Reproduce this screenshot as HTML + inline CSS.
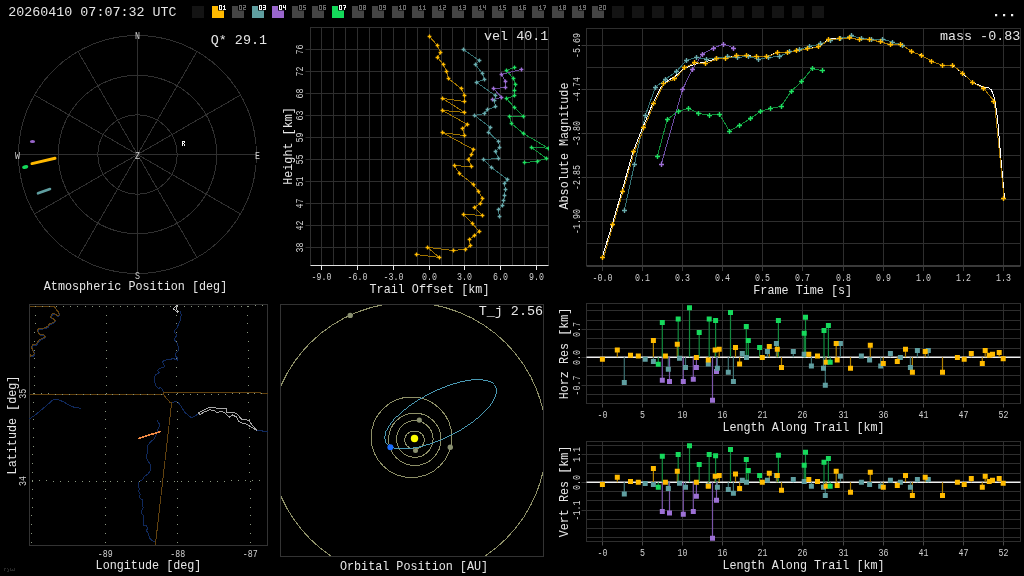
<!DOCTYPE html><html><head><meta charset="utf-8"><style>html,body{margin:0;padding:0;background:#000;width:1024px;height:576px;overflow:hidden}svg{display:block;will-change:transform}text{font-family:"Liberation Mono",monospace}</style></head><body>
<svg width="1024" height="576" viewBox="0 0 1024 576">
<rect width="1024" height="576" fill="#000"/>
<text x="8.3" y="16" font-size="13.35" fill="#e6e6e6">20260410 07:07:32 UTC</text>
<rect x="192" y="6" width="12" height="12" fill="#141414"/>
<rect x="212" y="6" width="12" height="12" fill="#ffb900"/>
<rect x="218" y="4" width="9" height="6.5" fill="#000"/>
<path d="M219 5h1v1h-1zM220 5h1v1h-1zM221 5h1v1h-1zM219 6h1v1h-1zM221 6h1v1h-1zM219 7h1v1h-1zM221 7h1v1h-1zM219 8h1v1h-1zM221 8h1v1h-1zM219 9h1v1h-1zM220 9h1v1h-1zM221 9h1v1h-1zM224 5h1v1h-1zM223 6h1v1h-1zM224 6h1v1h-1zM224 7h1v1h-1zM224 8h1v1h-1zM223 9h1v1h-1zM224 9h1v1h-1zM225 9h1v1h-1z" fill="#f4f4f4"/>
<rect x="232" y="6" width="12" height="12" fill="#444"/>
<rect x="238" y="4" width="9" height="6.5" fill="#000"/>
<path d="M239 5h1v1h-1zM240 5h1v1h-1zM241 5h1v1h-1zM239 6h1v1h-1zM241 6h1v1h-1zM239 7h1v1h-1zM241 7h1v1h-1zM239 8h1v1h-1zM241 8h1v1h-1zM239 9h1v1h-1zM240 9h1v1h-1zM241 9h1v1h-1zM243 5h1v1h-1zM244 5h1v1h-1zM245 5h1v1h-1zM245 6h1v1h-1zM243 7h1v1h-1zM244 7h1v1h-1zM245 7h1v1h-1zM243 8h1v1h-1zM243 9h1v1h-1zM244 9h1v1h-1zM245 9h1v1h-1z" fill="#666"/>
<rect x="252" y="6" width="12" height="12" fill="#5f9ea0"/>
<rect x="258" y="4" width="9" height="6.5" fill="#000"/>
<path d="M259 5h1v1h-1zM260 5h1v1h-1zM261 5h1v1h-1zM259 6h1v1h-1zM261 6h1v1h-1zM259 7h1v1h-1zM261 7h1v1h-1zM259 8h1v1h-1zM261 8h1v1h-1zM259 9h1v1h-1zM260 9h1v1h-1zM261 9h1v1h-1zM263 5h1v1h-1zM264 5h1v1h-1zM265 5h1v1h-1zM265 6h1v1h-1zM263 7h1v1h-1zM264 7h1v1h-1zM265 7h1v1h-1zM265 8h1v1h-1zM263 9h1v1h-1zM264 9h1v1h-1zM265 9h1v1h-1z" fill="#f4f4f4"/>
<rect x="272" y="6" width="12" height="12" fill="#9966cc"/>
<rect x="278" y="4" width="9" height="6.5" fill="#000"/>
<path d="M279 5h1v1h-1zM280 5h1v1h-1zM281 5h1v1h-1zM279 6h1v1h-1zM281 6h1v1h-1zM279 7h1v1h-1zM281 7h1v1h-1zM279 8h1v1h-1zM281 8h1v1h-1zM279 9h1v1h-1zM280 9h1v1h-1zM281 9h1v1h-1zM283 5h1v1h-1zM285 5h1v1h-1zM283 6h1v1h-1zM285 6h1v1h-1zM283 7h1v1h-1zM284 7h1v1h-1zM285 7h1v1h-1zM285 8h1v1h-1zM285 9h1v1h-1z" fill="#f4f4f4"/>
<rect x="292" y="6" width="12" height="12" fill="#444"/>
<rect x="298" y="4" width="9" height="6.5" fill="#000"/>
<path d="M299 5h1v1h-1zM300 5h1v1h-1zM301 5h1v1h-1zM299 6h1v1h-1zM301 6h1v1h-1zM299 7h1v1h-1zM301 7h1v1h-1zM299 8h1v1h-1zM301 8h1v1h-1zM299 9h1v1h-1zM300 9h1v1h-1zM301 9h1v1h-1zM303 5h1v1h-1zM304 5h1v1h-1zM305 5h1v1h-1zM303 6h1v1h-1zM303 7h1v1h-1zM304 7h1v1h-1zM305 7h1v1h-1zM305 8h1v1h-1zM303 9h1v1h-1zM304 9h1v1h-1zM305 9h1v1h-1z" fill="#666"/>
<rect x="312" y="6" width="12" height="12" fill="#444"/>
<rect x="318" y="4" width="9" height="6.5" fill="#000"/>
<path d="M319 5h1v1h-1zM320 5h1v1h-1zM321 5h1v1h-1zM319 6h1v1h-1zM321 6h1v1h-1zM319 7h1v1h-1zM321 7h1v1h-1zM319 8h1v1h-1zM321 8h1v1h-1zM319 9h1v1h-1zM320 9h1v1h-1zM321 9h1v1h-1zM323 5h1v1h-1zM324 5h1v1h-1zM325 5h1v1h-1zM323 6h1v1h-1zM323 7h1v1h-1zM324 7h1v1h-1zM325 7h1v1h-1zM323 8h1v1h-1zM325 8h1v1h-1zM323 9h1v1h-1zM324 9h1v1h-1zM325 9h1v1h-1z" fill="#666"/>
<rect x="332" y="6" width="12" height="12" fill="#14d95a"/>
<rect x="338" y="4" width="9" height="6.5" fill="#000"/>
<path d="M339 5h1v1h-1zM340 5h1v1h-1zM341 5h1v1h-1zM339 6h1v1h-1zM341 6h1v1h-1zM339 7h1v1h-1zM341 7h1v1h-1zM339 8h1v1h-1zM341 8h1v1h-1zM339 9h1v1h-1zM340 9h1v1h-1zM341 9h1v1h-1zM343 5h1v1h-1zM344 5h1v1h-1zM345 5h1v1h-1zM345 6h1v1h-1zM344 7h1v1h-1zM345 7h1v1h-1zM344 8h1v1h-1zM344 9h1v1h-1z" fill="#f4f4f4"/>
<rect x="352" y="6" width="12" height="12" fill="#444"/>
<rect x="358" y="4" width="9" height="6.5" fill="#000"/>
<path d="M359 5h1v1h-1zM360 5h1v1h-1zM361 5h1v1h-1zM359 6h1v1h-1zM361 6h1v1h-1zM359 7h1v1h-1zM361 7h1v1h-1zM359 8h1v1h-1zM361 8h1v1h-1zM359 9h1v1h-1zM360 9h1v1h-1zM361 9h1v1h-1zM363 5h1v1h-1zM364 5h1v1h-1zM365 5h1v1h-1zM363 6h1v1h-1zM365 6h1v1h-1zM363 7h1v1h-1zM364 7h1v1h-1zM365 7h1v1h-1zM363 8h1v1h-1zM365 8h1v1h-1zM363 9h1v1h-1zM364 9h1v1h-1zM365 9h1v1h-1z" fill="#666"/>
<rect x="372" y="6" width="12" height="12" fill="#444"/>
<rect x="378" y="4" width="9" height="6.5" fill="#000"/>
<path d="M379 5h1v1h-1zM380 5h1v1h-1zM381 5h1v1h-1zM379 6h1v1h-1zM381 6h1v1h-1zM379 7h1v1h-1zM381 7h1v1h-1zM379 8h1v1h-1zM381 8h1v1h-1zM379 9h1v1h-1zM380 9h1v1h-1zM381 9h1v1h-1zM383 5h1v1h-1zM384 5h1v1h-1zM385 5h1v1h-1zM383 6h1v1h-1zM385 6h1v1h-1zM383 7h1v1h-1zM384 7h1v1h-1zM385 7h1v1h-1zM385 8h1v1h-1zM383 9h1v1h-1zM384 9h1v1h-1zM385 9h1v1h-1z" fill="#666"/>
<rect x="392" y="6" width="12" height="12" fill="#444"/>
<rect x="398" y="4" width="9" height="6.5" fill="#000"/>
<path d="M400 5h1v1h-1zM399 6h1v1h-1zM400 6h1v1h-1zM400 7h1v1h-1zM400 8h1v1h-1zM399 9h1v1h-1zM400 9h1v1h-1zM401 9h1v1h-1zM403 5h1v1h-1zM404 5h1v1h-1zM405 5h1v1h-1zM403 6h1v1h-1zM405 6h1v1h-1zM403 7h1v1h-1zM405 7h1v1h-1zM403 8h1v1h-1zM405 8h1v1h-1zM403 9h1v1h-1zM404 9h1v1h-1zM405 9h1v1h-1z" fill="#666"/>
<rect x="412" y="6" width="12" height="12" fill="#444"/>
<rect x="418" y="4" width="9" height="6.5" fill="#000"/>
<path d="M420 5h1v1h-1zM419 6h1v1h-1zM420 6h1v1h-1zM420 7h1v1h-1zM420 8h1v1h-1zM419 9h1v1h-1zM420 9h1v1h-1zM421 9h1v1h-1zM424 5h1v1h-1zM423 6h1v1h-1zM424 6h1v1h-1zM424 7h1v1h-1zM424 8h1v1h-1zM423 9h1v1h-1zM424 9h1v1h-1zM425 9h1v1h-1z" fill="#666"/>
<rect x="432" y="6" width="12" height="12" fill="#444"/>
<rect x="438" y="4" width="9" height="6.5" fill="#000"/>
<path d="M440 5h1v1h-1zM439 6h1v1h-1zM440 6h1v1h-1zM440 7h1v1h-1zM440 8h1v1h-1zM439 9h1v1h-1zM440 9h1v1h-1zM441 9h1v1h-1zM443 5h1v1h-1zM444 5h1v1h-1zM445 5h1v1h-1zM445 6h1v1h-1zM443 7h1v1h-1zM444 7h1v1h-1zM445 7h1v1h-1zM443 8h1v1h-1zM443 9h1v1h-1zM444 9h1v1h-1zM445 9h1v1h-1z" fill="#666"/>
<rect x="452" y="6" width="12" height="12" fill="#444"/>
<rect x="458" y="4" width="9" height="6.5" fill="#000"/>
<path d="M460 5h1v1h-1zM459 6h1v1h-1zM460 6h1v1h-1zM460 7h1v1h-1zM460 8h1v1h-1zM459 9h1v1h-1zM460 9h1v1h-1zM461 9h1v1h-1zM463 5h1v1h-1zM464 5h1v1h-1zM465 5h1v1h-1zM465 6h1v1h-1zM463 7h1v1h-1zM464 7h1v1h-1zM465 7h1v1h-1zM465 8h1v1h-1zM463 9h1v1h-1zM464 9h1v1h-1zM465 9h1v1h-1z" fill="#666"/>
<rect x="472" y="6" width="12" height="12" fill="#444"/>
<rect x="478" y="4" width="9" height="6.5" fill="#000"/>
<path d="M480 5h1v1h-1zM479 6h1v1h-1zM480 6h1v1h-1zM480 7h1v1h-1zM480 8h1v1h-1zM479 9h1v1h-1zM480 9h1v1h-1zM481 9h1v1h-1zM483 5h1v1h-1zM485 5h1v1h-1zM483 6h1v1h-1zM485 6h1v1h-1zM483 7h1v1h-1zM484 7h1v1h-1zM485 7h1v1h-1zM485 8h1v1h-1zM485 9h1v1h-1z" fill="#666"/>
<rect x="492" y="6" width="12" height="12" fill="#444"/>
<rect x="498" y="4" width="9" height="6.5" fill="#000"/>
<path d="M500 5h1v1h-1zM499 6h1v1h-1zM500 6h1v1h-1zM500 7h1v1h-1zM500 8h1v1h-1zM499 9h1v1h-1zM500 9h1v1h-1zM501 9h1v1h-1zM503 5h1v1h-1zM504 5h1v1h-1zM505 5h1v1h-1zM503 6h1v1h-1zM503 7h1v1h-1zM504 7h1v1h-1zM505 7h1v1h-1zM505 8h1v1h-1zM503 9h1v1h-1zM504 9h1v1h-1zM505 9h1v1h-1z" fill="#666"/>
<rect x="512" y="6" width="12" height="12" fill="#444"/>
<rect x="518" y="4" width="9" height="6.5" fill="#000"/>
<path d="M520 5h1v1h-1zM519 6h1v1h-1zM520 6h1v1h-1zM520 7h1v1h-1zM520 8h1v1h-1zM519 9h1v1h-1zM520 9h1v1h-1zM521 9h1v1h-1zM523 5h1v1h-1zM524 5h1v1h-1zM525 5h1v1h-1zM523 6h1v1h-1zM523 7h1v1h-1zM524 7h1v1h-1zM525 7h1v1h-1zM523 8h1v1h-1zM525 8h1v1h-1zM523 9h1v1h-1zM524 9h1v1h-1zM525 9h1v1h-1z" fill="#666"/>
<rect x="532" y="6" width="12" height="12" fill="#444"/>
<rect x="538" y="4" width="9" height="6.5" fill="#000"/>
<path d="M540 5h1v1h-1zM539 6h1v1h-1zM540 6h1v1h-1zM540 7h1v1h-1zM540 8h1v1h-1zM539 9h1v1h-1zM540 9h1v1h-1zM541 9h1v1h-1zM543 5h1v1h-1zM544 5h1v1h-1zM545 5h1v1h-1zM545 6h1v1h-1zM544 7h1v1h-1zM545 7h1v1h-1zM544 8h1v1h-1zM544 9h1v1h-1z" fill="#666"/>
<rect x="552" y="6" width="12" height="12" fill="#444"/>
<rect x="558" y="4" width="9" height="6.5" fill="#000"/>
<path d="M560 5h1v1h-1zM559 6h1v1h-1zM560 6h1v1h-1zM560 7h1v1h-1zM560 8h1v1h-1zM559 9h1v1h-1zM560 9h1v1h-1zM561 9h1v1h-1zM563 5h1v1h-1zM564 5h1v1h-1zM565 5h1v1h-1zM563 6h1v1h-1zM565 6h1v1h-1zM563 7h1v1h-1zM564 7h1v1h-1zM565 7h1v1h-1zM563 8h1v1h-1zM565 8h1v1h-1zM563 9h1v1h-1zM564 9h1v1h-1zM565 9h1v1h-1z" fill="#666"/>
<rect x="572" y="6" width="12" height="12" fill="#444"/>
<rect x="578" y="4" width="9" height="6.5" fill="#000"/>
<path d="M580 5h1v1h-1zM579 6h1v1h-1zM580 6h1v1h-1zM580 7h1v1h-1zM580 8h1v1h-1zM579 9h1v1h-1zM580 9h1v1h-1zM581 9h1v1h-1zM583 5h1v1h-1zM584 5h1v1h-1zM585 5h1v1h-1zM583 6h1v1h-1zM585 6h1v1h-1zM583 7h1v1h-1zM584 7h1v1h-1zM585 7h1v1h-1zM585 8h1v1h-1zM583 9h1v1h-1zM584 9h1v1h-1zM585 9h1v1h-1z" fill="#666"/>
<rect x="592" y="6" width="12" height="12" fill="#444"/>
<rect x="598" y="4" width="9" height="6.5" fill="#000"/>
<path d="M599 5h1v1h-1zM600 5h1v1h-1zM601 5h1v1h-1zM601 6h1v1h-1zM599 7h1v1h-1zM600 7h1v1h-1zM601 7h1v1h-1zM599 8h1v1h-1zM599 9h1v1h-1zM600 9h1v1h-1zM601 9h1v1h-1zM603 5h1v1h-1zM604 5h1v1h-1zM605 5h1v1h-1zM603 6h1v1h-1zM605 6h1v1h-1zM603 7h1v1h-1zM605 7h1v1h-1zM603 8h1v1h-1zM605 8h1v1h-1zM603 9h1v1h-1zM604 9h1v1h-1zM605 9h1v1h-1z" fill="#666"/>
<rect x="612" y="6" width="12" height="12" fill="#141414"/>
<rect x="632" y="6" width="12" height="12" fill="#141414"/>
<rect x="652" y="6" width="12" height="12" fill="#141414"/>
<rect x="672" y="6" width="12" height="12" fill="#141414"/>
<rect x="692" y="6" width="12" height="12" fill="#141414"/>
<rect x="712" y="6" width="12" height="12" fill="#141414"/>
<rect x="732" y="6" width="12" height="12" fill="#141414"/>
<rect x="752" y="6" width="12" height="12" fill="#141414"/>
<rect x="772" y="6" width="12" height="12" fill="#141414"/>
<rect x="792" y="6" width="12" height="12" fill="#141414"/>
<rect x="812" y="6" width="12" height="12" fill="#141414"/>
<path d="M995 14h2.2v2.2h-2.2zM1003 14h2.2v2.2h-2.2zM1011 14h2.2v2.2h-2.2z" fill="#f0f0f0"/>
<path d="M4 568h2v1h-1v2h-1zM7 568h1v1h-1zM8 569h1v3h-2v-1h1zM10 568h1v2h1v-1h1v1h1v-2h1v3h-5z" fill="#262626"/>
<circle cx="137.5" cy="154.5" r="39.7" fill="none" stroke="#303030" stroke-width="1" shape-rendering="crispEdges"/>
<circle cx="137.5" cy="154.5" r="79.3" fill="none" stroke="#303030" stroke-width="1" shape-rendering="crispEdges"/>
<circle cx="137.5" cy="154.5" r="119" fill="none" stroke="#303030" stroke-width="1" shape-rendering="crispEdges"/>
<line x1="137.5" y1="154.5" x2="256.50" y2="154.50" stroke="#303030" stroke-width="1" shape-rendering="crispEdges"/>
<line x1="137.5" y1="154.5" x2="240.56" y2="214.00" stroke="#303030" stroke-width="1" shape-rendering="crispEdges"/>
<line x1="137.5" y1="154.5" x2="197.00" y2="257.56" stroke="#303030" stroke-width="1" shape-rendering="crispEdges"/>
<line x1="137.5" y1="154.5" x2="137.50" y2="273.50" stroke="#303030" stroke-width="1" shape-rendering="crispEdges"/>
<line x1="137.5" y1="154.5" x2="78.00" y2="257.56" stroke="#303030" stroke-width="1" shape-rendering="crispEdges"/>
<line x1="137.5" y1="154.5" x2="34.44" y2="214.00" stroke="#303030" stroke-width="1" shape-rendering="crispEdges"/>
<line x1="137.5" y1="154.5" x2="18.50" y2="154.50" stroke="#303030" stroke-width="1" shape-rendering="crispEdges"/>
<line x1="137.5" y1="154.5" x2="34.44" y2="95.00" stroke="#303030" stroke-width="1" shape-rendering="crispEdges"/>
<line x1="137.5" y1="154.5" x2="78.00" y2="51.44" stroke="#303030" stroke-width="1" shape-rendering="crispEdges"/>
<line x1="137.5" y1="154.5" x2="137.50" y2="35.50" stroke="#303030" stroke-width="1" shape-rendering="crispEdges"/>
<line x1="137.5" y1="154.5" x2="197.00" y2="51.44" stroke="#303030" stroke-width="1" shape-rendering="crispEdges"/>
<line x1="137.5" y1="154.5" x2="240.56" y2="95.00" stroke="#303030" stroke-width="1" shape-rendering="crispEdges"/>
<text transform="translate(137.5,38.5) scale(0.83,1)" font-size="10" fill="#d0d0d0" text-anchor="middle">N</text>
<text transform="translate(137.5,278.5) scale(0.83,1)" font-size="10" fill="#d0d0d0" text-anchor="middle">S</text>
<text transform="translate(17.5,158.5) scale(0.83,1)" font-size="10" fill="#d0d0d0" text-anchor="middle">W</text>
<text transform="translate(257.5,158.5) scale(0.83,1)" font-size="10" fill="#d0d0d0" text-anchor="middle">E</text>
<text transform="translate(137.5,158.5) scale(0.83,1)" font-size="10" fill="#d0d0d0" text-anchor="middle">Z</text>
<path d="M182 141h3v1h-3zM182 142h1v4h-1zM184 142h1v1h-1zM183 143h1v1h-1zM184 144h1v2h-1z" fill="#f4f4f4"/>
<text x="267" y="44" font-size="13.4" fill="#e6e6e6" text-anchor="end">Q* 29.1</text>
<text transform="translate(135.5,290) scale(0.98,1)" font-size="12" fill="#e6e6e6" text-anchor="middle">Atmospheric Position [deg]</text>
<line x1="321.50" y1="27.5" x2="321.50" y2="265.5" stroke="#2e2e2e"/>
<line x1="333.50" y1="27.5" x2="333.50" y2="265.5" stroke="#2e2e2e"/>
<line x1="345.50" y1="27.5" x2="345.50" y2="265.5" stroke="#2e2e2e"/>
<line x1="357.50" y1="27.5" x2="357.50" y2="265.5" stroke="#2e2e2e"/>
<line x1="369.50" y1="27.5" x2="369.50" y2="265.5" stroke="#2e2e2e"/>
<line x1="381.50" y1="27.5" x2="381.50" y2="265.5" stroke="#2e2e2e"/>
<line x1="393.50" y1="27.5" x2="393.50" y2="265.5" stroke="#2e2e2e"/>
<line x1="405.50" y1="27.5" x2="405.50" y2="265.5" stroke="#2e2e2e"/>
<line x1="417.50" y1="27.5" x2="417.50" y2="265.5" stroke="#2e2e2e"/>
<line x1="429.50" y1="27.5" x2="429.50" y2="265.5" stroke="#2e2e2e"/>
<line x1="441.50" y1="27.5" x2="441.50" y2="265.5" stroke="#2e2e2e"/>
<line x1="452.50" y1="27.5" x2="452.50" y2="265.5" stroke="#2e2e2e"/>
<line x1="464.50" y1="27.5" x2="464.50" y2="265.5" stroke="#2e2e2e"/>
<line x1="476.50" y1="27.5" x2="476.50" y2="265.5" stroke="#2e2e2e"/>
<line x1="488.50" y1="27.5" x2="488.50" y2="265.5" stroke="#2e2e2e"/>
<line x1="500.50" y1="27.5" x2="500.50" y2="265.5" stroke="#2e2e2e"/>
<line x1="512.50" y1="27.5" x2="512.50" y2="265.5" stroke="#2e2e2e"/>
<line x1="524.50" y1="27.5" x2="524.50" y2="265.5" stroke="#2e2e2e"/>
<line x1="536.50" y1="27.5" x2="536.50" y2="265.5" stroke="#2e2e2e"/>
<line x1="305.5" y1="49.5" x2="548.5" y2="49.5" stroke="#2e2e2e"/>
<text transform="translate(302.9,49.5) rotate(-90) scale(0.77,1)" font-size="10.8" fill="#cfcfcf" text-anchor="middle">76</text>
<line x1="305.5" y1="71.5" x2="548.5" y2="71.5" stroke="#2e2e2e"/>
<text transform="translate(302.9,71.5) rotate(-90) scale(0.77,1)" font-size="10.8" fill="#cfcfcf" text-anchor="middle">72</text>
<line x1="305.5" y1="93.5" x2="548.5" y2="93.5" stroke="#2e2e2e"/>
<text transform="translate(302.9,93.5) rotate(-90) scale(0.77,1)" font-size="10.8" fill="#cfcfcf" text-anchor="middle">68</text>
<line x1="305.5" y1="115.5" x2="548.5" y2="115.5" stroke="#2e2e2e"/>
<text transform="translate(302.9,115.5) rotate(-90) scale(0.77,1)" font-size="10.8" fill="#cfcfcf" text-anchor="middle">63</text>
<line x1="305.5" y1="137.5" x2="548.5" y2="137.5" stroke="#2e2e2e"/>
<text transform="translate(302.9,137.5) rotate(-90) scale(0.77,1)" font-size="10.8" fill="#cfcfcf" text-anchor="middle">59</text>
<line x1="305.5" y1="159.5" x2="548.5" y2="159.5" stroke="#2e2e2e"/>
<text transform="translate(302.9,159.5) rotate(-90) scale(0.77,1)" font-size="10.8" fill="#cfcfcf" text-anchor="middle">55</text>
<line x1="305.5" y1="181.5" x2="548.5" y2="181.5" stroke="#2e2e2e"/>
<text transform="translate(302.9,181.5) rotate(-90) scale(0.77,1)" font-size="10.8" fill="#cfcfcf" text-anchor="middle">51</text>
<line x1="305.5" y1="203.5" x2="548.5" y2="203.5" stroke="#2e2e2e"/>
<text transform="translate(302.9,203.5) rotate(-90) scale(0.77,1)" font-size="10.8" fill="#cfcfcf" text-anchor="middle">47</text>
<line x1="305.5" y1="225.5" x2="548.5" y2="225.5" stroke="#2e2e2e"/>
<text transform="translate(302.9,225.5) rotate(-90) scale(0.77,1)" font-size="10.8" fill="#cfcfcf" text-anchor="middle">42</text>
<line x1="305.5" y1="247.5" x2="548.5" y2="247.5" stroke="#2e2e2e"/>
<text transform="translate(302.9,247.5) rotate(-90) scale(0.77,1)" font-size="10.8" fill="#cfcfcf" text-anchor="middle">38</text>
<rect x="310.5" y="27.5" width="238.0" height="238.0" fill="none" stroke="#2e2e2e"/>
<line x1="310.5" y1="265.5" x2="548.5" y2="265.5" stroke="#e0e0e0"/>
<line x1="321.5" y1="265.5" x2="321.5" y2="270.0" stroke="#e8e8e8"/>
<text transform="translate(321.5,279.5) scale(0.83,1)" font-size="10" fill="#cfcfcf" text-anchor="middle">-9.0</text>
<line x1="357.5" y1="265.5" x2="357.5" y2="270.0" stroke="#e8e8e8"/>
<text transform="translate(357.5,279.5) scale(0.83,1)" font-size="10" fill="#cfcfcf" text-anchor="middle">-6.0</text>
<line x1="393.5" y1="265.5" x2="393.5" y2="270.0" stroke="#e8e8e8"/>
<text transform="translate(393.5,279.5) scale(0.83,1)" font-size="10" fill="#cfcfcf" text-anchor="middle">-3.0</text>
<line x1="429.5" y1="265.5" x2="429.5" y2="270.0" stroke="#e8e8e8"/>
<text transform="translate(429.5,279.5) scale(0.83,1)" font-size="10" fill="#cfcfcf" text-anchor="middle">0.0</text>
<line x1="464.5" y1="265.5" x2="464.5" y2="270.0" stroke="#e8e8e8"/>
<text transform="translate(464.5,279.5) scale(0.83,1)" font-size="10" fill="#cfcfcf" text-anchor="middle">3.0</text>
<line x1="500.5" y1="265.5" x2="500.5" y2="270.0" stroke="#e8e8e8"/>
<text transform="translate(500.5,279.5) scale(0.83,1)" font-size="10" fill="#cfcfcf" text-anchor="middle">6.0</text>
<line x1="536.5" y1="265.5" x2="536.5" y2="270.0" stroke="#e8e8e8"/>
<text transform="translate(536.5,279.5) scale(0.83,1)" font-size="10" fill="#cfcfcf" text-anchor="middle">9.0</text>
<text transform="translate(429.5,293) scale(0.98,1)" font-size="12" fill="#e6e6e6" text-anchor="middle">Trail Offset [km]</text>
<text transform="translate(291.7,146) rotate(-90) scale(0.98,1)" font-size="12" fill="#e6e6e6" text-anchor="middle">Height [km]</text>
<text x="548.3" y="39.5" font-size="13.4" fill="#e6e6e6" text-anchor="end">vel 40.1</text>
<line x1="602.5" y1="28.5" x2="602.5" y2="265.5" stroke="#2e2e2e"/>
<line x1="642.5" y1="28.5" x2="642.5" y2="265.5" stroke="#2e2e2e"/>
<line x1="682.5" y1="28.5" x2="682.5" y2="265.5" stroke="#2e2e2e"/>
<line x1="722.5" y1="28.5" x2="722.5" y2="265.5" stroke="#2e2e2e"/>
<line x1="762.5" y1="28.5" x2="762.5" y2="265.5" stroke="#2e2e2e"/>
<line x1="802.5" y1="28.5" x2="802.5" y2="265.5" stroke="#2e2e2e"/>
<line x1="843.5" y1="28.5" x2="843.5" y2="265.5" stroke="#2e2e2e"/>
<line x1="883.5" y1="28.5" x2="883.5" y2="265.5" stroke="#2e2e2e"/>
<line x1="923.5" y1="28.5" x2="923.5" y2="265.5" stroke="#2e2e2e"/>
<line x1="963.5" y1="28.5" x2="963.5" y2="265.5" stroke="#2e2e2e"/>
<line x1="1003.5" y1="28.5" x2="1003.5" y2="265.5" stroke="#2e2e2e"/>
<line x1="586.5" y1="45.5" x2="1020.5" y2="45.5" stroke="#2e2e2e"/>
<line x1="586.5" y1="67.5" x2="1020.5" y2="67.5" stroke="#2e2e2e"/>
<line x1="586.5" y1="89.5" x2="1020.5" y2="89.5" stroke="#2e2e2e"/>
<line x1="586.5" y1="111.5" x2="1020.5" y2="111.5" stroke="#2e2e2e"/>
<line x1="586.5" y1="133.5" x2="1020.5" y2="133.5" stroke="#2e2e2e"/>
<line x1="586.5" y1="155.5" x2="1020.5" y2="155.5" stroke="#2e2e2e"/>
<line x1="586.5" y1="177.5" x2="1020.5" y2="177.5" stroke="#2e2e2e"/>
<line x1="586.5" y1="199.5" x2="1020.5" y2="199.5" stroke="#2e2e2e"/>
<line x1="586.5" y1="221.5" x2="1020.5" y2="221.5" stroke="#2e2e2e"/>
<line x1="586.5" y1="243.5" x2="1020.5" y2="243.5" stroke="#2e2e2e"/>
<line x1="581.5" y1="45.5" x2="586.5" y2="45.5" stroke="#3a3a3a"/>
<text transform="translate(579.8,45.5) rotate(-90) scale(0.77,1)" font-size="10.8" fill="#cfcfcf" text-anchor="middle">-5.69</text>
<line x1="581.5" y1="89.5" x2="586.5" y2="89.5" stroke="#3a3a3a"/>
<text transform="translate(579.8,89.5) rotate(-90) scale(0.77,1)" font-size="10.8" fill="#cfcfcf" text-anchor="middle">-4.74</text>
<line x1="581.5" y1="133.5" x2="586.5" y2="133.5" stroke="#3a3a3a"/>
<text transform="translate(579.8,133.5) rotate(-90) scale(0.77,1)" font-size="10.8" fill="#cfcfcf" text-anchor="middle">-3.80</text>
<line x1="581.5" y1="177.5" x2="586.5" y2="177.5" stroke="#3a3a3a"/>
<text transform="translate(579.8,177.5) rotate(-90) scale(0.77,1)" font-size="10.8" fill="#cfcfcf" text-anchor="middle">-2.85</text>
<line x1="581.5" y1="221.5" x2="586.5" y2="221.5" stroke="#3a3a3a"/>
<text transform="translate(579.8,221.5) rotate(-90) scale(0.77,1)" font-size="10.8" fill="#cfcfcf" text-anchor="middle">-1.90</text>
<rect x="586.5" y="28.5" width="434.0" height="237.0" fill="none" stroke="#2e2e2e"/>
<line x1="586.5" y1="266.0" x2="1020.5" y2="266.0" stroke="#3a3a3a" stroke-width="2"/>
<line x1="602.5" y1="266.5" x2="602.5" y2="271.0" stroke="#3a3a3a"/>
<text transform="translate(602.5,281) scale(0.83,1)" font-size="10" fill="#cfcfcf" text-anchor="middle">-0.0</text>
<line x1="642.5" y1="266.5" x2="642.5" y2="271.0" stroke="#3a3a3a"/>
<text transform="translate(642.5,281) scale(0.83,1)" font-size="10" fill="#cfcfcf" text-anchor="middle">0.1</text>
<line x1="682.5" y1="266.5" x2="682.5" y2="271.0" stroke="#3a3a3a"/>
<text transform="translate(682.5,281) scale(0.83,1)" font-size="10" fill="#cfcfcf" text-anchor="middle">0.3</text>
<line x1="722.5" y1="266.5" x2="722.5" y2="271.0" stroke="#3a3a3a"/>
<text transform="translate(722.5,281) scale(0.83,1)" font-size="10" fill="#cfcfcf" text-anchor="middle">0.4</text>
<line x1="762.5" y1="266.5" x2="762.5" y2="271.0" stroke="#3a3a3a"/>
<text transform="translate(762.5,281) scale(0.83,1)" font-size="10" fill="#cfcfcf" text-anchor="middle">0.5</text>
<line x1="802.5" y1="266.5" x2="802.5" y2="271.0" stroke="#3a3a3a"/>
<text transform="translate(802.5,281) scale(0.83,1)" font-size="10" fill="#cfcfcf" text-anchor="middle">0.7</text>
<line x1="843.5" y1="266.5" x2="843.5" y2="271.0" stroke="#3a3a3a"/>
<text transform="translate(843.5,281) scale(0.83,1)" font-size="10" fill="#cfcfcf" text-anchor="middle">0.8</text>
<line x1="883.5" y1="266.5" x2="883.5" y2="271.0" stroke="#3a3a3a"/>
<text transform="translate(883.5,281) scale(0.83,1)" font-size="10" fill="#cfcfcf" text-anchor="middle">0.9</text>
<line x1="923.5" y1="266.5" x2="923.5" y2="271.0" stroke="#3a3a3a"/>
<text transform="translate(923.5,281) scale(0.83,1)" font-size="10" fill="#cfcfcf" text-anchor="middle">1.0</text>
<line x1="963.5" y1="266.5" x2="963.5" y2="271.0" stroke="#3a3a3a"/>
<text transform="translate(963.5,281) scale(0.83,1)" font-size="10" fill="#cfcfcf" text-anchor="middle">1.2</text>
<line x1="1003.5" y1="266.5" x2="1003.5" y2="271.0" stroke="#3a3a3a"/>
<text transform="translate(1003.5,281) scale(0.83,1)" font-size="10" fill="#cfcfcf" text-anchor="middle">1.3</text>
<text transform="translate(802.7,294) scale(0.98,1)" font-size="12" fill="#e6e6e6" text-anchor="middle">Frame Time [s]</text>
<text transform="translate(568,146) rotate(-90) scale(0.98,1)" font-size="12" fill="#e6e6e6" text-anchor="middle">Absolute Magnitude</text>
<text x="1020.3" y="39.5" font-size="13.4" fill="#e6e6e6" text-anchor="end">mass -0.83</text>
<rect x="29.5" y="304.5" width="238.0" height="241.0" fill="none" stroke="#333"/>
<polyline fill="none" shape-rendering="crispEdges" stroke="#10295c" stroke-width="1" points="180.7,311.2 181.2,315.4 180.2,320.6 178.1,325.3 177.3,327.4 175.0,330.0 174.8,332.6 176.9,335.2 175.0,338.3 174.8,340.4 177.6,344.0 178.3,346.7 178.1,350.8 175.0,354.0 175.0,356.0 178.1,358.1 177.3,360.2 175.0,359.2 171.9,358.1 170.8,359.7 163.5,360.2 162.7,362.3 164.3,365.4 163.8,367.5 161.1,368.0 157.5,370.1 159.1,372.7 155.9,374.8 154.4,377.4 154.9,383.1 155.9,386.2 158.0,388.3 160.6,387.8 162.7,389.9 163.5,392.5"/>
<polyline fill="none" shape-rendering="crispEdges" stroke="#10295c" stroke-width="1" points="172.1,402.9 175.7,401.4 178.3,402.4 180.9,406.0 184.6,412.3 186.7,414.0 191.4,417.6 195.0,416.0 198.1,414.0"/>
<polyline fill="none" shape-rendering="crispEdges" stroke="#10295c" stroke-width="1" points="157.1,420.1 159.9,425.2 157.7,429.7 156.0,435.3 153.7,439.3 150.3,442.1 147.8,445.5 147.5,452.2 146.4,457.3 148.1,461.3 150.5,464.7 150.5,470.3 148.1,473.7 144.0,476.9 142.7,479.4 138.9,482.0 138.3,486.4 139.6,488.9 138.3,490.8 140.2,494.0 139.6,497.8 142.1,499.7 142.1,505.4 143.4,507.3 141.5,511.0 141.5,513.6 143.4,515.5 143.4,525.0 146.5,525.6 147.5,528.2 146.5,530.7 148.4,533.9 149.7,538.3 151.6,540.2 155.4,542.1 156.6,543.4"/>
<polyline fill="none" shape-rendering="crispEdges" stroke="#10295c" stroke-width="1" points="29.4,418.8 34.0,416.0 40.8,410.4 46.5,405.5 53.3,399.6 58.5,399.6 63.8,402.0 69.0,405.0 74.2,407.3 81.5,408.3"/>
<polyline fill="none" shape-rendering="crispEdges" stroke="#10295c" stroke-width="1" points="256.5,430.0 262.0,430.5 263.0,431.5 267.5,432.0"/>
<polyline fill="none" shape-rendering="crispEdges" stroke="#10295c" stroke-width="1" points="55.3,307.1 56.0,308.9 58.9,312.6 60.0,315.7 57.9,316.2 55.3,314.2 52.7,314.7 51.1,317.8 53.7,319.4 56.0,321.2 54.2,323.0 50.1,324.6 48.5,327.2 44.8,328.7 39.1,329.6 38.1,331.3 40.2,335.0 44.3,335.5 45.9,337.1 44.3,338.6 40.2,340.2 38.1,342.8 36.5,345.4 32.9,345.4 32.3,348.5 33.9,351.7 35.0,354.3 33.4,356.3 31.0,356.9 30.8,354.8"/>
<polyline fill="none" shape-rendering="crispEdges" stroke="#62420f" stroke-width="1" points="29.5,306.4 54.6,306.4 55.3,308.2 58.2,311.9 59.2,315.0 57.2,315.5 54.6,313.5 52.0,314.0 50.4,317.1 53.0,318.7 55.3,320.5 53.5,322.3 49.4,323.9 47.8,326.5 44.1,328.0 38.4,328.9 37.4,330.6 39.5,334.3 43.6,334.8 45.2,336.4 43.6,337.9 39.5,339.5 37.4,342.1 35.8,344.7 32.2,344.7 31.6,347.8 33.2,351.0 34.2,353.6 32.7,355.6 30.3,356.2 30.1,354.1"/>
<polyline fill="none" shape-rendering="crispEdges" stroke="#62420f" stroke-width="1" points="29.5,394.5 163.5,394.5 163.5,392.5 260.6,392.5 260.6,393.5 267.5,393.5"/>
<polyline fill="none" shape-rendering="crispEdges" stroke="#62420f" stroke-width="1" points="163.5,394.5 165.8,397.7 170.0,402.4 171.6,402.9 155.4,544.6"/>
<polyline fill="none" shape-rendering="crispEdges" stroke="#a8a8a8" stroke-width="1" points="198.1,412.9 204.4,409.8 209.0,407.7 214.8,407.5 217.9,408.8 222.0,408.8 226.2,408.8 226.8,412.4 230.4,412.9 233.5,412.4 237.7,414.5 240.8,418.6 242.9,419.7 249.2,420.2 250.7,423.3 256.5,429.6 256.5,430.1 249.2,425.9 246.0,423.9 242.9,423.3 238.8,421.2 236.7,417.1 232.5,415.0 229.4,417.1 224.7,412.9 222.0,411.4 216.9,412.4 213.8,410.3 209.6,409.8 203.3,412.4 200.2,414.5 198.1,412.9"/>
<path d="M35 306h1v1h-1zM35 315h1v1h-1zM35 323h1v1h-1zM34 332h1v1h-1zM34 341h1v1h-1zM34 350h1v1h-1zM34 358h1v1h-1zM34 367h1v1h-1zM34 376h1v1h-1zM34 385h1v1h-1zM33 393h1v1h-1zM33 402h1v1h-1zM33 411h1v1h-1zM33 419h1v1h-1zM33 428h1v1h-1zM33 437h1v1h-1zM33 446h1v1h-1zM32 454h1v1h-1zM32 463h1v1h-1zM32 472h1v1h-1zM32 481h1v1h-1zM32 489h1v1h-1zM32 498h1v1h-1zM32 507h1v1h-1zM31 515h1v1h-1zM31 524h1v1h-1zM31 533h1v1h-1zM31 542h1v1h-1zM106 306h1v1h-1zM106 315h1v1h-1zM106 323h1v1h-1zM106 332h1v1h-1zM106 341h1v1h-1zM106 350h1v1h-1zM106 358h1v1h-1zM106 367h1v1h-1zM106 376h1v1h-1zM106 385h1v1h-1zM106 393h1v1h-1zM105 402h1v1h-1zM105 411h1v1h-1zM105 419h1v1h-1zM105 428h1v1h-1zM105 437h1v1h-1zM105 446h1v1h-1zM105 454h1v1h-1zM105 463h1v1h-1zM105 472h1v1h-1zM105 481h1v1h-1zM105 489h1v1h-1zM105 498h1v1h-1zM105 507h1v1h-1zM105 515h1v1h-1zM105 524h1v1h-1zM105 533h1v1h-1zM105 542h1v1h-1zM176 306h1v1h-1zM176 315h1v1h-1zM176 323h1v1h-1zM176 332h1v1h-1zM176 341h1v1h-1zM176 350h1v1h-1zM176 358h1v1h-1zM176 367h1v1h-1zM176 376h1v1h-1zM176 385h1v1h-1zM177 393h1v1h-1zM177 402h1v1h-1zM177 411h1v1h-1zM177 419h1v1h-1zM177 428h1v1h-1zM177 437h1v1h-1zM177 446h1v1h-1zM177 454h1v1h-1zM177 463h1v1h-1zM177 472h1v1h-1zM177 481h1v1h-1zM177 489h1v1h-1zM177 498h1v1h-1zM177 507h1v1h-1zM177 515h1v1h-1zM177 524h1v1h-1zM177 533h1v1h-1zM177 542h1v1h-1zM247 306h1v1h-1zM247 315h1v1h-1zM247 323h1v1h-1zM247 332h1v1h-1zM248 341h1v1h-1zM248 350h1v1h-1zM248 358h1v1h-1zM248 367h1v1h-1zM248 376h1v1h-1zM248 385h1v1h-1zM248 393h1v1h-1zM248 402h1v1h-1zM249 411h1v1h-1zM249 419h1v1h-1zM249 428h1v1h-1zM249 437h1v1h-1zM249 446h1v1h-1zM249 454h1v1h-1zM249 463h1v1h-1zM249 472h1v1h-1zM250 481h1v1h-1zM250 489h1v1h-1zM250 498h1v1h-1zM250 507h1v1h-1zM250 515h1v1h-1zM250 524h1v1h-1zM250 533h1v1h-1zM250 542h1v1h-1zM35 306h1v1h-1zM42 306h1v1h-1zM49 306h1v1h-1zM56 306h1v1h-1zM63 306h1v1h-1zM70 306h1v1h-1zM77 306h1v1h-1zM85 306h1v1h-1zM92 306h1v1h-1zM99 306h1v1h-1zM106 306h1v1h-1zM113 306h1v1h-1zM120 306h1v1h-1zM127 306h1v1h-1zM134 306h1v1h-1zM141 306h1v1h-1zM148 306h1v1h-1zM156 306h1v1h-1zM163 306h1v1h-1zM170 306h1v1h-1zM177 306h1v1h-1zM184 306h1v1h-1zM191 306h1v1h-1zM198 306h1v1h-1zM205 306h1v1h-1zM212 306h1v1h-1zM219 306h1v1h-1zM227 306h1v1h-1zM234 306h1v1h-1zM241 306h1v1h-1zM248 306h1v1h-1zM255 305h1v1h-1zM262 305h1v1h-1zM34 393h1v1h-1zM41 393h1v1h-1zM48 393h1v1h-1zM55 394h1v1h-1zM62 394h1v1h-1zM69 394h1v1h-1zM76 394h1v1h-1zM83 394h1v1h-1zM90 394h1v1h-1zM97 394h1v1h-1zM105 394h1v1h-1zM112 394h1v1h-1zM119 394h1v1h-1zM126 394h1v1h-1zM133 394h1v1h-1zM140 394h1v1h-1zM147 394h1v1h-1zM154 394h1v1h-1zM161 394h1v1h-1zM168 394h1v1h-1zM176 394h1v1h-1zM183 394h1v1h-1zM190 394h1v1h-1zM197 394h1v1h-1zM204 394h1v1h-1zM211 394h1v1h-1zM218 394h1v1h-1zM225 394h1v1h-1zM232 393h1v1h-1zM239 393h1v1h-1zM247 393h1v1h-1zM254 393h1v1h-1zM261 393h1v1h-1zM32 480h1v1h-1zM39 480h1v1h-1zM46 480h1v1h-1zM53 481h1v1h-1zM60 481h1v1h-1zM68 481h1v1h-1zM75 481h1v1h-1zM82 481h1v1h-1zM89 481h1v1h-1zM96 481h1v1h-1zM103 481h1v1h-1zM110 481h1v1h-1zM117 481h1v1h-1zM124 481h1v1h-1zM131 481h1v1h-1zM139 481h1v1h-1zM146 481h1v1h-1zM153 481h1v1h-1zM160 481h1v1h-1zM167 481h1v1h-1zM174 481h1v1h-1zM181 481h1v1h-1zM188 481h1v1h-1zM195 481h1v1h-1zM202 481h1v1h-1zM210 481h1v1h-1zM217 481h1v1h-1zM224 481h1v1h-1zM231 480h1v1h-1zM238 480h1v1h-1zM245 480h1v1h-1zM252 480h1v1h-1zM259 480h1v1h-1z" fill="#8a9680"/>
<polyline fill="none" shape-rendering="crispEdges" stroke="#bdbdbd" stroke-width="1" points="176.6,305.0 173.5,309.0 177.6,312.0 178.7,311.5 176.0,309.0 177.6,306.0 176.6,305.0"/>
<line x1="138.1" y1="438.5" x2="160.9" y2="431.4" stroke="#f08a45" stroke-width="1.6" shape-rendering="crispEdges"/>
<text transform="translate(105.3,556.5) scale(0.83,1)" font-size="10" fill="#cfcfcf" text-anchor="middle">-89</text>
<text transform="translate(177.7,556.5) scale(0.83,1)" font-size="10" fill="#cfcfcf" text-anchor="middle">-88</text>
<text transform="translate(250.2,556.5) scale(0.83,1)" font-size="10" fill="#cfcfcf" text-anchor="middle">-87</text>
<text transform="translate(26.4,393.75) rotate(-90) scale(0.77,1)" font-size="10.8" fill="#cfcfcf" text-anchor="middle">35</text>
<text transform="translate(26.4,481) rotate(-90) scale(0.77,1)" font-size="10.8" fill="#cfcfcf" text-anchor="middle">34</text>
<text transform="translate(148.5,569) scale(0.98,1)" font-size="12" fill="#e6e6e6" text-anchor="middle">Longitude [deg]</text>
<text transform="translate(16,425) rotate(-90) scale(0.98,1)" font-size="12" fill="#e6e6e6" text-anchor="middle">Latitude [deg]</text>
<rect x="280.5" y="304.5" width="263.0" height="252.0" fill="none" stroke="#333"/>
<svg x="0" y="0" width="1024" height="576"><clipPath id="co"><rect x="281" y="305" width="262" height="251"/></clipPath><g clip-path="url(#co)" fill="none" stroke="#8e9068" stroke-width="1" shape-rendering="crispEdges">
<circle cx="408" cy="441" r="138.5"/>
<circle cx="411.5" cy="437.3" r="40.3"/>
<circle cx="414.8" cy="439.3" r="26.2"/>
<circle cx="414.8" cy="439" r="18.3"/>
<ellipse cx="414.5" cy="440" rx="10" ry="9"/>
</g>
<ellipse cx="440.6" cy="414.3" rx="61.6" ry="23.4" transform="rotate(-26.8 440.6 414.3)" fill="none" stroke="#4a9ab4" stroke-width="1" shape-rendering="crispEdges"/>
<circle cx="350.2" cy="315.4" r="2.7" fill="#8a9070"/>
<circle cx="450.3" cy="447.3" r="2.7" fill="#8a9070"/>
<circle cx="419.3" cy="420.1" r="2.6" fill="#8a9070"/>
<circle cx="415.5" cy="450.6" r="2.5" fill="#8a9070"/>
<circle cx="390.4" cy="447.3" r="3" fill="#1a6cff"/>
<circle cx="414.5" cy="438.5" r="3.7" fill="#ffff00"/>
</svg>
<text x="543" y="315.3" font-size="13.4" fill="#e6e6e6" text-anchor="end">T_j 2.56</text>
<text transform="translate(414,570) scale(0.98,1)" font-size="12" fill="#e6e6e6" text-anchor="middle">Orbital Position [AU]</text>
<ellipse cx="32.5" cy="141.5" rx="2.6" ry="1.6" fill="#9966cc"/>
<line x1="32" y1="163.6" x2="55" y2="158.3" stroke="#ffb900" stroke-width="3" stroke-linecap="round"/>
<ellipse cx="25.2" cy="167" rx="3.1" ry="1.9" transform="rotate(-15 25.2 167)" fill="#14d95a"/>
<line x1="38" y1="193.3" x2="50" y2="189" stroke="#5f9ea0" stroke-width="2.6" stroke-linecap="round"/>
<svg x="0" y="0" width="1024" height="576"><clipPath id="cm"><rect x="587" y="28" width="433" height="241"/></clipPath><g clip-path="url(#cm)">
<polyline fill="none" shape-rendering="crispEdges" stroke="#118c3a" stroke-width="1" points="657.5,156.0 667.2,119.5 678.0,111.4 688.5,108.3 698.5,113.5 709.6,115.2 719.6,114.5 729.4,131.0 739.4,125.4 750.5,118.6 760.4,111.3 770.5,108.5 781.2,106.4 791.3,91.1 801.6,81.6 812.2,68.5 822.6,70.8"/>
<polyline fill="none" shape-rendering="crispEdges" stroke="#6c4ca2" stroke-width="1" points="661.2,164.3 682.5,89.6 692.2,69.7 702.1,54.4 713.4,48.0 723.5,44.0 733.9,48.0"/>
<polyline fill="none" shape-rendering="crispEdges" stroke="#357274" stroke-width="1" points="624.3,210.5 634.5,164.3 645.3,115.3 655.5,87.2 665.3,79.4 676.5,71.5 686.1,60.5 696.6,57.2 706.5,59.3 716.9,58.1 727.3,56.7 737.4,57.6 748.1,56.2 758.3,59.5 768.2,57.4 779.5,56.4 789.6,51.7 799.5,49.4 809.4,46.5 820.3,43.9 830.4,40.2 840.5,38.5 851.4,35.9 861.2,38.5 871.1,39.4 882.6,39.1 892.5,42.2 902.5,45.1"/>
<polyline fill="none" shape-rendering="crispEdges" stroke="#ffffff" stroke-width="1" points="602.2,257.4 612.2,224.4 621.9,191.2 633.2,151.1 643.0,127.0 652.5,104.0 661.0,87.0 668.0,80.5 675.0,76.5 684.0,68.5 694.0,64.5 705.0,62.0 716.9,58.5 725.6,58.5 736.4,55.6 746.4,55.6 756.9,56.6 767.2,56.5 777.7,52.3 787.4,52.3 797.3,50.6 807.7,48.9 819.0,46.6 828.9,39.1 840.3,38.6 849.7,37.8 859.9,39.7 870.0,39.5 880.9,41.8 890.6,44.9 901.2,44.4 911.6,51.6 921.5,55.4 931.6,61.2 942.5,65.5 952.9,65.5 962.9,73.4 972.6,82.5 985.0,87.5 988.5,87.5 991.5,90.0 994.0,97.0 995.5,104.0 997.5,118.0 1001.0,160.0 1004.5,198.0"/>
<polyline fill="none" shape-rendering="crispEdges" stroke="#a87800" stroke-width="1" points="603.4,257.9 613.2,224.9 622.9,191.7 634.3,151.6 644.2,127.8 654.2,103.4 663.8,83.9 675.3,78.8 685.0,67.4 695.1,62.6 706.0,63.9 717.3,58.7 726.0,58.7 736.8,55.8 746.8,55.8 757.3,56.8 767.6,56.7 778.1,52.5 787.8,52.5 797.7,50.8 808.1,49.0 819.4,46.8 829.3,39.3 840.7,38.8 850.1,38.0 860.3,39.9 870.4,39.7 881.3,42.0 891.0,45.1 901.6,44.6 912.0,51.8 921.9,55.6 932.0,61.4 942.9,65.7 953.3,65.7 963.3,73.6 973.0,82.7 984.1,88.9 994.4,101.6 1004.1,198.6"/>
<path d="M655.0 156.5h5.0M657.5 154.0v5.0M665.0 119.5h5.0M667.5 117.0v5.0M676.0 111.5h5.0M678.5 109.0v5.0M686.0 108.5h5.0M688.5 106.0v5.0M696.0 113.5h5.0M698.5 111.0v5.0M707.0 115.5h5.0M709.5 113.0v5.0M717.0 114.5h5.0M719.5 112.0v5.0M727.0 131.5h5.0M729.5 129.0v5.0M737.0 125.5h5.0M739.5 123.0v5.0M748.0 118.5h5.0M750.5 116.0v5.0M758.0 111.5h5.0M760.5 109.0v5.0M768.0 108.5h5.0M770.5 106.0v5.0M779.0 106.5h5.0M781.5 104.0v5.0M789.0 91.5h5.0M791.5 89.0v5.0M799.0 81.5h5.0M801.5 79.0v5.0M810.0 68.5h5.0M812.5 66.0v5.0M820.0 70.5h5.0M822.5 68.0v5.0" stroke="#1ee060" stroke-width="1.4" fill="none"/>
<path d="M659.0 164.5h5.0M661.5 162.0v5.0M680.0 89.5h5.0M682.5 87.0v5.0M690.0 69.5h5.0M692.5 67.0v5.0M700.0 54.5h5.0M702.5 52.0v5.0M711.0 48.5h5.0M713.5 46.0v5.0M721.0 44.5h5.0M723.5 42.0v5.0M731.0 48.5h5.0M733.5 46.0v5.0" stroke="#a070d8" stroke-width="1.4" fill="none"/>
<path d="M622.0 210.5h5.0M624.5 208.0v5.0M632.0 164.5h5.0M634.5 162.0v5.0M643.0 115.5h5.0M645.5 113.0v5.0M653.0 87.5h5.0M655.5 85.0v5.0M663.0 79.5h5.0M665.5 77.0v5.0M674.0 71.5h5.0M676.5 69.0v5.0M684.0 60.5h5.0M686.5 58.0v5.0M694.0 57.5h5.0M696.5 55.0v5.0M704.0 59.5h5.0M706.5 57.0v5.0M714.0 58.5h5.0M716.5 56.0v5.0M725.0 56.5h5.0M727.5 54.0v5.0M735.0 57.5h5.0M737.5 55.0v5.0M746.0 56.5h5.0M748.5 54.0v5.0M756.0 59.5h5.0M758.5 57.0v5.0M766.0 57.5h5.0M768.5 55.0v5.0M777.0 56.5h5.0M779.5 54.0v5.0M787.0 51.5h5.0M789.5 49.0v5.0M797.0 49.5h5.0M799.5 47.0v5.0M807.0 46.5h5.0M809.5 44.0v5.0M818.0 43.5h5.0M820.5 41.0v5.0M828.0 40.5h5.0M830.5 38.0v5.0M838.0 38.5h5.0M840.5 36.0v5.0M849.0 35.5h5.0M851.5 33.0v5.0M859.0 38.5h5.0M861.5 36.0v5.0M869.0 39.5h5.0M871.5 37.0v5.0M880.0 39.5h5.0M882.5 37.0v5.0M890.0 42.5h5.0M892.5 40.0v5.0M900.0 45.5h5.0M902.5 43.0v5.0" stroke="#6aacae" stroke-width="1.4" fill="none"/>
<path d="M600.0 257.5h5.0M602.5 255.0v5.0M610.0 224.5h5.0M612.5 222.0v5.0M620.0 191.5h5.0M622.5 189.0v5.0M631.0 151.5h5.0M633.5 149.0v5.0M641.0 127.5h5.0M643.5 125.0v5.0M651.0 103.5h5.0M653.5 101.0v5.0M661.0 83.5h5.0M663.5 81.0v5.0M672.0 78.5h5.0M674.5 76.0v5.0M682.0 67.5h5.0M684.5 65.0v5.0M692.0 62.5h5.0M694.5 60.0v5.0M703.0 63.5h5.0M705.5 61.0v5.0M714.0 58.5h5.0M716.5 56.0v5.0M723.0 58.5h5.0M725.5 56.0v5.0M734.0 55.5h5.0M736.5 53.0v5.0M744.0 55.5h5.0M746.5 53.0v5.0M754.0 56.5h5.0M756.5 54.0v5.0M764.0 56.5h5.0M766.5 54.0v5.0M775.0 52.5h5.0M777.5 50.0v5.0M785.0 52.5h5.0M787.5 50.0v5.0M794.0 50.5h5.0M796.5 48.0v5.0M805.0 48.5h5.0M807.5 46.0v5.0M816.0 46.5h5.0M818.5 44.0v5.0M826.0 39.5h5.0M828.5 37.0v5.0M837.0 38.5h5.0M839.5 36.0v5.0M847.0 37.5h5.0M849.5 35.0v5.0M857.0 39.5h5.0M859.5 37.0v5.0M867.0 39.5h5.0M869.5 37.0v5.0M878.0 41.5h5.0M880.5 39.0v5.0M888.0 44.5h5.0M890.5 42.0v5.0M898.0 44.5h5.0M900.5 42.0v5.0M909.0 51.5h5.0M911.5 49.0v5.0M919.0 55.5h5.0M921.5 53.0v5.0M929.0 61.5h5.0M931.5 59.0v5.0M940.0 65.5h5.0M942.5 63.0v5.0M950.0 65.5h5.0M952.5 63.0v5.0M960.0 73.5h5.0M962.5 71.0v5.0M970.0 82.5h5.0M972.5 80.0v5.0M981.0 88.5h5.0M983.5 86.0v5.0M991.0 101.5h5.0M993.5 99.0v5.0M1001.0 198.5h5.0M1003.5 196.0v5.0" stroke="#ffbb00" stroke-width="1.4" fill="none"/>
</g></svg>
<svg x="0" y="0" width="1024" height="576"><clipPath id="ch"><rect x="311" y="28" width="237.5" height="237"/></clipPath><g clip-path="url(#ch)">
<polyline fill="none" shape-rendering="crispEdges" stroke="#12903c" stroke-width="1" points="514.3,67.4 506.5,70.6 513.6,78.7 515.3,84.7 514.6,90.4 514.6,95.6 506.5,98.6 514.3,107.4 523.4,116.3 509.5,116.3 511.4,123.5 523.4,133.5 548.2,148.2 531.2,147.3 546.6,158.4 537.4,161.2 524.5,162.6"/>
<polyline fill="none" shape-rendering="crispEdges" stroke="#6c4c9c" stroke-width="1" points="521.5,69.3 501.5,74.5 505.4,81.7 505.4,87.6 493.5,88.5 501.5,97.3 492.4,99.6"/>
<polyline fill="none" shape-rendering="crispEdges" stroke="#356e70" stroke-width="1" points="463.4,49.5 479.4,60.6 475.5,64.4 482.4,73.5 484.3,79.5 476.5,82.4 495.6,95.7 494.6,100.6 495.4,106.7 487.5,109.5 484.6,113.4 474.6,115.4 490.2,127.3 488.5,132.3 498.4,141.5 499.7,147.6 495.6,151.5 498.6,158.5 483.2,159.5 491.2,167.4 507.5,179.4 504.5,183.5 505.4,189.6 504.6,195.6 503.6,200.6 502.5,205.4 498.5,209.5 499.4,216.6"/>
<polyline fill="none" shape-rendering="crispEdges" stroke="#a07400" stroke-width="1" points="429.4,36.5 437.5,45.5 440.6,52.4 437.5,57.4 443.5,64.5 446.6,71.5 448.4,78.6 461.3,88.6 464.5,95.7 464.5,101.5 442.4,98.4 464.5,112.4 442.4,110.4 467.4,124.5 462.6,128.6 464.5,135.6 442.4,132.6 473.4,149.5 471.4,154.5 468.7,159.4 471.4,166.7 454.4,165.6 459.3,173.4 473.4,184.5 478.6,191.6 482.5,198.8 480.3,203.4 474.6,207.3 482.5,215.5 463.4,214.3 472.3,223.5 479.2,231.4 474.4,235.5 469.5,239.5 470.2,245.7 465.6,249.3 453.3,250.5 427.6,247.4 439.4,257.5 416.3,254.5"/>
<path d="M512.6 67.5h3.8M514.5 65.6v3.8M504.6 70.5h3.8M506.5 68.6v3.8M511.6 78.5h3.8M513.5 76.6v3.8M513.6 84.5h3.8M515.5 82.6v3.8M512.6 90.5h3.8M514.5 88.6v3.8M512.6 95.5h3.8M514.5 93.6v3.8M504.6 98.5h3.8M506.5 96.6v3.8M512.6 107.5h3.8M514.5 105.6v3.8M521.6 116.5h3.8M523.5 114.6v3.8M507.6 116.5h3.8M509.5 114.6v3.8M509.6 123.5h3.8M511.5 121.6v3.8M521.6 133.5h3.8M523.5 131.6v3.8M546.6 148.5h3.8M548.5 146.6v3.8M529.6 147.5h3.8M531.5 145.6v3.8M544.6 158.5h3.8M546.5 156.6v3.8M535.6 161.5h3.8M537.5 159.6v3.8M522.6 162.5h3.8M524.5 160.6v3.8" stroke="#1ee060" stroke-width="1.3" fill="none"/>
<path d="M519.6 69.5h3.8M521.5 67.6v3.8M499.6 74.5h3.8M501.5 72.6v3.8M503.6 81.5h3.8M505.5 79.6v3.8M503.6 87.5h3.8M505.5 85.6v3.8M491.6 88.5h3.8M493.5 86.6v3.8M499.6 97.5h3.8M501.5 95.6v3.8M490.6 99.5h3.8M492.5 97.6v3.8" stroke="#a070d8" stroke-width="1.3" fill="none"/>
<path d="M461.6 49.5h3.8M463.5 47.6v3.8M477.6 60.5h3.8M479.5 58.6v3.8M473.6 64.5h3.8M475.5 62.6v3.8M480.6 73.5h3.8M482.5 71.6v3.8M482.6 79.5h3.8M484.5 77.6v3.8M474.6 82.5h3.8M476.5 80.6v3.8M493.6 95.5h3.8M495.5 93.6v3.8M492.6 100.5h3.8M494.5 98.6v3.8M493.6 106.5h3.8M495.5 104.6v3.8M485.6 109.5h3.8M487.5 107.6v3.8M482.6 113.5h3.8M484.5 111.6v3.8M472.6 115.5h3.8M474.5 113.6v3.8M488.6 127.5h3.8M490.5 125.6v3.8M486.6 132.5h3.8M488.5 130.6v3.8M496.6 141.5h3.8M498.5 139.6v3.8M497.6 147.5h3.8M499.5 145.6v3.8M493.6 151.5h3.8M495.5 149.6v3.8M496.6 158.5h3.8M498.5 156.6v3.8M481.6 159.5h3.8M483.5 157.6v3.8M489.6 167.5h3.8M491.5 165.6v3.8M505.6 179.5h3.8M507.5 177.6v3.8M502.6 183.5h3.8M504.5 181.6v3.8M503.6 189.5h3.8M505.5 187.6v3.8M502.6 195.5h3.8M504.5 193.6v3.8M501.6 200.5h3.8M503.5 198.6v3.8M500.6 205.5h3.8M502.5 203.6v3.8M496.6 209.5h3.8M498.5 207.6v3.8M497.6 216.5h3.8M499.5 214.6v3.8" stroke="#6aacae" stroke-width="1.3" fill="none"/>
<path d="M427.6 36.5h3.8M429.5 34.6v3.8M435.6 45.5h3.8M437.5 43.6v3.8M438.6 52.5h3.8M440.5 50.6v3.8M435.6 57.5h3.8M437.5 55.6v3.8M441.6 64.5h3.8M443.5 62.6v3.8M444.6 71.5h3.8M446.5 69.6v3.8M446.6 78.5h3.8M448.5 76.6v3.8M459.6 88.5h3.8M461.5 86.6v3.8M462.6 95.5h3.8M464.5 93.6v3.8M462.6 101.5h3.8M464.5 99.6v3.8M440.6 98.5h3.8M442.5 96.6v3.8M462.6 112.5h3.8M464.5 110.6v3.8M440.6 110.5h3.8M442.5 108.6v3.8M465.6 124.5h3.8M467.5 122.6v3.8M460.6 128.5h3.8M462.5 126.6v3.8M462.6 135.5h3.8M464.5 133.6v3.8M440.6 132.5h3.8M442.5 130.6v3.8M471.6 149.5h3.8M473.5 147.6v3.8M469.6 154.5h3.8M471.5 152.6v3.8M466.6 159.5h3.8M468.5 157.6v3.8M469.6 166.5h3.8M471.5 164.6v3.8M452.6 165.5h3.8M454.5 163.6v3.8M457.6 173.5h3.8M459.5 171.6v3.8M471.6 184.5h3.8M473.5 182.6v3.8M476.6 191.5h3.8M478.5 189.6v3.8M480.6 198.5h3.8M482.5 196.6v3.8M478.6 203.5h3.8M480.5 201.6v3.8M472.6 207.5h3.8M474.5 205.6v3.8M480.6 215.5h3.8M482.5 213.6v3.8M461.6 214.5h3.8M463.5 212.6v3.8M470.6 223.5h3.8M472.5 221.6v3.8M477.6 231.5h3.8M479.5 229.6v3.8M472.6 235.5h3.8M474.5 233.6v3.8M467.6 239.5h3.8M469.5 237.6v3.8M468.6 245.5h3.8M470.5 243.6v3.8M463.6 249.5h3.8M465.5 247.6v3.8M451.6 250.5h3.8M453.5 248.6v3.8M425.6 247.5h3.8M427.5 245.6v3.8M437.6 257.5h3.8M439.5 255.6v3.8M414.6 254.5h3.8M416.5 252.6v3.8" stroke="#ffbb00" stroke-width="1.3" fill="none"/>
</g></svg>
<line x1="602.5" y1="303.5" x2="602.5" y2="403.5" stroke="#2e2e2e"/>
<line x1="602.5" y1="403.5" x2="602.5" y2="407.5" stroke="#cfcfcf" stroke-opacity="0.35"/>
<line x1="642.5" y1="303.5" x2="642.5" y2="403.5" stroke="#2e2e2e"/>
<line x1="642.5" y1="403.5" x2="642.5" y2="407.5" stroke="#cfcfcf" stroke-opacity="0.35"/>
<line x1="682.5" y1="303.5" x2="682.5" y2="403.5" stroke="#2e2e2e"/>
<line x1="682.5" y1="403.5" x2="682.5" y2="407.5" stroke="#cfcfcf" stroke-opacity="0.35"/>
<line x1="722.5" y1="303.5" x2="722.5" y2="403.5" stroke="#2e2e2e"/>
<line x1="722.5" y1="403.5" x2="722.5" y2="407.5" stroke="#cfcfcf" stroke-opacity="0.35"/>
<line x1="762.5" y1="303.5" x2="762.5" y2="403.5" stroke="#2e2e2e"/>
<line x1="762.5" y1="403.5" x2="762.5" y2="407.5" stroke="#cfcfcf" stroke-opacity="0.35"/>
<line x1="802.5" y1="303.5" x2="802.5" y2="403.5" stroke="#2e2e2e"/>
<line x1="802.5" y1="403.5" x2="802.5" y2="407.5" stroke="#cfcfcf" stroke-opacity="0.35"/>
<line x1="843.5" y1="303.5" x2="843.5" y2="403.5" stroke="#2e2e2e"/>
<line x1="843.5" y1="403.5" x2="843.5" y2="407.5" stroke="#cfcfcf" stroke-opacity="0.35"/>
<line x1="883.5" y1="303.5" x2="883.5" y2="403.5" stroke="#2e2e2e"/>
<line x1="883.5" y1="403.5" x2="883.5" y2="407.5" stroke="#cfcfcf" stroke-opacity="0.35"/>
<line x1="923.5" y1="303.5" x2="923.5" y2="403.5" stroke="#2e2e2e"/>
<line x1="923.5" y1="403.5" x2="923.5" y2="407.5" stroke="#cfcfcf" stroke-opacity="0.35"/>
<line x1="963.5" y1="303.5" x2="963.5" y2="403.5" stroke="#2e2e2e"/>
<line x1="963.5" y1="403.5" x2="963.5" y2="407.5" stroke="#cfcfcf" stroke-opacity="0.35"/>
<line x1="1003.5" y1="303.5" x2="1003.5" y2="403.5" stroke="#2e2e2e"/>
<line x1="1003.5" y1="403.5" x2="1003.5" y2="407.5" stroke="#cfcfcf" stroke-opacity="0.35"/>
<line x1="586.5" y1="310.50" x2="1020.5" y2="310.50" stroke="#2e2e2e"/>
<line x1="586.5" y1="320.50" x2="1020.5" y2="320.50" stroke="#2e2e2e"/>
<line x1="586.5" y1="329.50" x2="1020.5" y2="329.50" stroke="#2e2e2e"/>
<line x1="586.5" y1="338.50" x2="1020.5" y2="338.50" stroke="#2e2e2e"/>
<line x1="586.5" y1="348.50" x2="1020.5" y2="348.50" stroke="#2e2e2e"/>
<line x1="586.5" y1="366.50" x2="1020.5" y2="366.50" stroke="#2e2e2e"/>
<line x1="586.5" y1="375.50" x2="1020.5" y2="375.50" stroke="#2e2e2e"/>
<line x1="586.5" y1="385.50" x2="1020.5" y2="385.50" stroke="#2e2e2e"/>
<line x1="586.5" y1="394.50" x2="1020.5" y2="394.50" stroke="#2e2e2e"/>
<rect x="586.5" y="303.5" width="434.0" height="100.0" fill="none" stroke="#2e2e2e"/>
<line x1="581.5" y1="329.50" x2="586.5" y2="329.50" stroke="#2e2e2e"/>
<text transform="translate(579.8,329.50) rotate(-90) scale(0.77,1)" font-size="10.8" fill="#cfcfcf" text-anchor="middle">0.7</text>
<line x1="581.5" y1="357.50" x2="586.5" y2="357.50" stroke="#2e2e2e"/>
<text transform="translate(579.8,357.50) rotate(-90) scale(0.77,1)" font-size="10.8" fill="#cfcfcf" text-anchor="middle">0.0</text>
<line x1="581.5" y1="385.50" x2="586.5" y2="385.50" stroke="#2e2e2e"/>
<text transform="translate(579.8,385.50) rotate(-90) scale(0.77,1)" font-size="10.8" fill="#cfcfcf" text-anchor="middle">-0.7</text>
<text transform="translate(568,353.5) rotate(-90) scale(0.98,1)" font-size="12" fill="#e6e6e6" text-anchor="middle">Horz Res [km]</text>
<text transform="translate(602.5,417.5) scale(0.83,1)" font-size="10" fill="#cfcfcf" text-anchor="middle">-0</text>
<text transform="translate(642.5,417.5) scale(0.83,1)" font-size="10" fill="#cfcfcf" text-anchor="middle">5</text>
<text transform="translate(682.5,417.5) scale(0.83,1)" font-size="10" fill="#cfcfcf" text-anchor="middle">10</text>
<text transform="translate(722.5,417.5) scale(0.83,1)" font-size="10" fill="#cfcfcf" text-anchor="middle">16</text>
<text transform="translate(762.5,417.5) scale(0.83,1)" font-size="10" fill="#cfcfcf" text-anchor="middle">21</text>
<text transform="translate(802.5,417.5) scale(0.83,1)" font-size="10" fill="#cfcfcf" text-anchor="middle">26</text>
<text transform="translate(843.5,417.5) scale(0.83,1)" font-size="10" fill="#cfcfcf" text-anchor="middle">31</text>
<text transform="translate(883.5,417.5) scale(0.83,1)" font-size="10" fill="#cfcfcf" text-anchor="middle">36</text>
<text transform="translate(923.5,417.5) scale(0.83,1)" font-size="10" fill="#cfcfcf" text-anchor="middle">41</text>
<text transform="translate(963.5,417.5) scale(0.83,1)" font-size="10" fill="#cfcfcf" text-anchor="middle">47</text>
<text transform="translate(1003.5,417.5) scale(0.83,1)" font-size="10" fill="#cfcfcf" text-anchor="middle">52</text>
<text transform="translate(803.5,431) scale(0.98,1)" font-size="12" fill="#e6e6e6" text-anchor="middle">Length Along Trail [km]</text>
<line x1="586.5" y1="357.3" x2="1020.5" y2="357.3" stroke="#f0f0f0" stroke-width="1.6"/>
<path d="M662.3 357.3V380.2M669.5 357.3V381.5M683.3 357.3V381.5M693.3 357.3V379.3M696.4 357.3V367.4M712.5 357.3V400.2M716.5 357.3V371.4" stroke="#7a55a8" stroke-width="1.2" fill="none"/>
<path d="M624.3 357.3V382.4M645.2 357.3V359.2M653.4 357.3V361.4M668.3 357.3V369.2M679.5 357.3V358.3M685.5 357.3V367.4M708.3 357.3V364.1M717.4 357.3V368.3M728.3 357.3V372.3M733.4 357.3V381.5M742.3 357.3V353.4M746.5 357.3V357.4M767.4 357.3V351.4M776.4 357.3V343.4M793.3 357.3V351.4M804.2 357.3V354.3M811.4 357.3V366.1M823.5 357.3V368.3M825.3 357.3V385.3M840.4 357.3V343.4M861.4 357.3V356.1M869.6 357.3V360.1M880.7 357.3V366.1M890.4 357.3V353.4M900.4 357.3V357.4M910.4 357.3V367.4M917.4 357.3V350.5M928.3 357.3V350.5" stroke="#3d7072" stroke-width="1.2" fill="none"/>
<path d="M602.4 357.3V359.2M617.3 357.3V350.1M630.5 357.3V355.2M638.3 357.3V356.1M653.4 357.3V340.5M665.4 357.3V356.1M677.3 357.3V344.3M696.4 357.3V357.4M708.3 357.3V360.1M715.2 357.3V350.1M719.2 357.3V349.2M735.5 357.3V347.4M739.6 357.3V364.1M762.3 357.3V357.4M769.3 357.3V346.5M777.3 357.3V349.2M781.5 357.3V367.4M808.8 357.3V354.3M817.5 357.3V356.1M826.2 357.3V362.3M836.2 357.3V343.4M837.2 357.3V360.1M850.5 357.3V368.3M870.3 357.3V345.2M883.3 357.3V363.4M897.3 357.3V361.4M905.5 357.3V349.2M912.4 357.3V372.3M925.2 357.3V351.4M942.5 357.3V372.3M957.4 357.3V357.4M964.2 357.3V359.2M971.3 357.3V353.4M982.3 357.3V363.4M985.2 357.3V350.5M989.2 357.3V355.2M992.5 357.3V354.3M999.2 357.3V352.5M1003.2 357.3V358.7" stroke="#b08000" stroke-width="1.2" fill="none"/>
<path d="M658.3 357.3V364.3M662.3 357.3V322.4M678.2 357.3V319.1M689.5 357.3V307.7M699.2 357.3V332.4M709.2 357.3V319.1M715.6 357.3V320.4M730.5 357.3V312.4M746.3 357.3V326.4M748.3 357.3V340.5M759.6 357.3V347.4M778.4 357.3V320.4M804.2 357.3V333.3M805.5 357.3V317.3M824.0 357.3V330.4M828.4 357.3V325.5M830.2 357.3V362.3" stroke="#128a3e" stroke-width="1.2" fill="none"/>
<path d="M659.8 377.7h5v5h-5zM667.0 379.0h5v5h-5zM680.8 379.0h5v5h-5zM690.8 376.8h5v5h-5zM693.9 364.9h5v5h-5zM710.0 397.7h5v5h-5zM714.0 368.9h5v5h-5z" fill="#9c70d4"/>
<path d="M621.8 379.9h5v5h-5zM642.7 356.7h5v5h-5zM650.9 358.9h5v5h-5zM665.8 366.7h5v5h-5zM677.0 355.8h5v5h-5zM683.0 364.9h5v5h-5zM705.8 361.6h5v5h-5zM714.9 365.8h5v5h-5zM725.8 369.8h5v5h-5zM730.9 379.0h5v5h-5zM739.8 350.9h5v5h-5zM744.0 354.9h5v5h-5zM764.9 348.9h5v5h-5zM773.9 340.9h5v5h-5zM790.8 348.9h5v5h-5zM801.7 351.8h5v5h-5zM808.9 363.6h5v5h-5zM821.0 365.8h5v5h-5zM822.8 382.8h5v5h-5zM837.9 340.9h5v5h-5zM858.9 353.6h5v5h-5zM867.1 357.6h5v5h-5zM878.2 363.6h5v5h-5zM887.9 350.9h5v5h-5zM897.9 354.9h5v5h-5zM907.9 364.9h5v5h-5zM914.9 348.0h5v5h-5zM925.8 348.0h5v5h-5z" fill="#5f9ea0"/>
<path d="M599.9 356.7h5v5h-5zM614.8 347.6h5v5h-5zM628.0 352.7h5v5h-5zM635.8 353.6h5v5h-5zM650.9 338.0h5v5h-5zM662.9 353.6h5v5h-5zM674.8 341.8h5v5h-5zM693.9 354.9h5v5h-5zM705.8 357.6h5v5h-5zM712.7 347.6h5v5h-5zM716.7 346.7h5v5h-5zM733.0 344.9h5v5h-5zM737.1 361.6h5v5h-5zM759.8 354.9h5v5h-5zM766.8 344.0h5v5h-5zM774.8 346.7h5v5h-5zM779.0 364.9h5v5h-5zM806.3 351.8h5v5h-5zM815.0 353.6h5v5h-5zM823.7 359.8h5v5h-5zM833.7 340.9h5v5h-5zM834.7 357.6h5v5h-5zM848.0 365.8h5v5h-5zM867.8 342.7h5v5h-5zM880.8 360.9h5v5h-5zM894.8 358.9h5v5h-5zM903.0 346.7h5v5h-5zM909.9 369.8h5v5h-5zM922.7 348.9h5v5h-5zM940.0 369.8h5v5h-5zM954.9 354.9h5v5h-5zM961.7 356.7h5v5h-5zM968.8 350.9h5v5h-5zM979.8 360.9h5v5h-5zM982.7 348.0h5v5h-5zM986.7 352.7h5v5h-5zM990.0 351.8h5v5h-5zM996.7 350.0h5v5h-5zM1000.7 356.2h5v5h-5z" fill="#ffbb00"/>
<path d="M655.8 361.8h5v5h-5zM659.8 319.9h5v5h-5zM675.7 316.6h5v5h-5zM687.0 305.2h5v5h-5zM696.7 329.9h5v5h-5zM706.7 316.6h5v5h-5zM713.1 317.9h5v5h-5zM728.0 309.9h5v5h-5zM743.8 323.9h5v5h-5zM745.8 338.0h5v5h-5zM757.1 344.9h5v5h-5zM775.9 317.9h5v5h-5zM801.7 330.8h5v5h-5zM803.0 314.8h5v5h-5zM821.5 327.9h5v5h-5zM825.9 323.0h5v5h-5zM827.7 359.8h5v5h-5z" fill="#16d95c"/>
<line x1="602.5" y1="441.5" x2="602.5" y2="541.5" stroke="#2e2e2e"/>
<line x1="602.5" y1="541.5" x2="602.5" y2="545.5" stroke="#cfcfcf" stroke-opacity="0.35"/>
<line x1="642.5" y1="441.5" x2="642.5" y2="541.5" stroke="#2e2e2e"/>
<line x1="642.5" y1="541.5" x2="642.5" y2="545.5" stroke="#cfcfcf" stroke-opacity="0.35"/>
<line x1="682.5" y1="441.5" x2="682.5" y2="541.5" stroke="#2e2e2e"/>
<line x1="682.5" y1="541.5" x2="682.5" y2="545.5" stroke="#cfcfcf" stroke-opacity="0.35"/>
<line x1="722.5" y1="441.5" x2="722.5" y2="541.5" stroke="#2e2e2e"/>
<line x1="722.5" y1="541.5" x2="722.5" y2="545.5" stroke="#cfcfcf" stroke-opacity="0.35"/>
<line x1="762.5" y1="441.5" x2="762.5" y2="541.5" stroke="#2e2e2e"/>
<line x1="762.5" y1="541.5" x2="762.5" y2="545.5" stroke="#cfcfcf" stroke-opacity="0.35"/>
<line x1="802.5" y1="441.5" x2="802.5" y2="541.5" stroke="#2e2e2e"/>
<line x1="802.5" y1="541.5" x2="802.5" y2="545.5" stroke="#cfcfcf" stroke-opacity="0.35"/>
<line x1="843.5" y1="441.5" x2="843.5" y2="541.5" stroke="#2e2e2e"/>
<line x1="843.5" y1="541.5" x2="843.5" y2="545.5" stroke="#cfcfcf" stroke-opacity="0.35"/>
<line x1="883.5" y1="441.5" x2="883.5" y2="541.5" stroke="#2e2e2e"/>
<line x1="883.5" y1="541.5" x2="883.5" y2="545.5" stroke="#cfcfcf" stroke-opacity="0.35"/>
<line x1="923.5" y1="441.5" x2="923.5" y2="541.5" stroke="#2e2e2e"/>
<line x1="923.5" y1="541.5" x2="923.5" y2="545.5" stroke="#cfcfcf" stroke-opacity="0.35"/>
<line x1="963.5" y1="441.5" x2="963.5" y2="541.5" stroke="#2e2e2e"/>
<line x1="963.5" y1="541.5" x2="963.5" y2="545.5" stroke="#cfcfcf" stroke-opacity="0.35"/>
<line x1="1003.5" y1="441.5" x2="1003.5" y2="541.5" stroke="#2e2e2e"/>
<line x1="1003.5" y1="541.5" x2="1003.5" y2="545.5" stroke="#cfcfcf" stroke-opacity="0.35"/>
<line x1="586.5" y1="445.50" x2="1020.5" y2="445.50" stroke="#2e2e2e"/>
<line x1="586.5" y1="454.50" x2="1020.5" y2="454.50" stroke="#2e2e2e"/>
<line x1="586.5" y1="463.50" x2="1020.5" y2="463.50" stroke="#2e2e2e"/>
<line x1="586.5" y1="473.50" x2="1020.5" y2="473.50" stroke="#2e2e2e"/>
<line x1="586.5" y1="491.50" x2="1020.5" y2="491.50" stroke="#2e2e2e"/>
<line x1="586.5" y1="500.50" x2="1020.5" y2="500.50" stroke="#2e2e2e"/>
<line x1="586.5" y1="510.50" x2="1020.5" y2="510.50" stroke="#2e2e2e"/>
<line x1="586.5" y1="519.50" x2="1020.5" y2="519.50" stroke="#2e2e2e"/>
<line x1="586.5" y1="528.50" x2="1020.5" y2="528.50" stroke="#2e2e2e"/>
<line x1="586.5" y1="537.50" x2="1020.5" y2="537.50" stroke="#2e2e2e"/>
<rect x="586.5" y="441.5" width="434.0" height="100.0" fill="none" stroke="#2e2e2e"/>
<line x1="581.5" y1="454.50" x2="586.5" y2="454.50" stroke="#2e2e2e"/>
<text transform="translate(579.8,454.50) rotate(-90) scale(0.77,1)" font-size="10.8" fill="#cfcfcf" text-anchor="middle">1.1</text>
<line x1="581.5" y1="482.50" x2="586.5" y2="482.50" stroke="#2e2e2e"/>
<text transform="translate(579.8,482.50) rotate(-90) scale(0.77,1)" font-size="10.8" fill="#cfcfcf" text-anchor="middle">0.0</text>
<line x1="581.5" y1="510.50" x2="586.5" y2="510.50" stroke="#2e2e2e"/>
<text transform="translate(579.8,510.50) rotate(-90) scale(0.77,1)" font-size="10.8" fill="#cfcfcf" text-anchor="middle">-1.1</text>
<text transform="translate(568,491.5) rotate(-90) scale(0.98,1)" font-size="12" fill="#e6e6e6" text-anchor="middle">Vert Res [km]</text>
<text transform="translate(602.5,556) scale(0.83,1)" font-size="10" fill="#cfcfcf" text-anchor="middle">-0</text>
<text transform="translate(642.5,556) scale(0.83,1)" font-size="10" fill="#cfcfcf" text-anchor="middle">5</text>
<text transform="translate(682.5,556) scale(0.83,1)" font-size="10" fill="#cfcfcf" text-anchor="middle">10</text>
<text transform="translate(722.5,556) scale(0.83,1)" font-size="10" fill="#cfcfcf" text-anchor="middle">16</text>
<text transform="translate(762.5,556) scale(0.83,1)" font-size="10" fill="#cfcfcf" text-anchor="middle">21</text>
<text transform="translate(802.5,556) scale(0.83,1)" font-size="10" fill="#cfcfcf" text-anchor="middle">26</text>
<text transform="translate(843.5,556) scale(0.83,1)" font-size="10" fill="#cfcfcf" text-anchor="middle">31</text>
<text transform="translate(883.5,556) scale(0.83,1)" font-size="10" fill="#cfcfcf" text-anchor="middle">36</text>
<text transform="translate(923.5,556) scale(0.83,1)" font-size="10" fill="#cfcfcf" text-anchor="middle">41</text>
<text transform="translate(963.5,556) scale(0.83,1)" font-size="10" fill="#cfcfcf" text-anchor="middle">47</text>
<text transform="translate(1003.5,556) scale(0.83,1)" font-size="10" fill="#cfcfcf" text-anchor="middle">52</text>
<text transform="translate(803.5,569) scale(0.98,1)" font-size="12" fill="#e6e6e6" text-anchor="middle">Length Along Trail [km]</text>
<line x1="586.5" y1="482.3" x2="1020.5" y2="482.3" stroke="#f0f0f0" stroke-width="1.6"/>
<path d="M662.3 482.3V511.4M669.5 482.3V513.1M683.3 482.3V514.2M693.3 482.3V511.4M696.4 482.3V496.3M712.5 482.3V538.2M716.5 482.3V500.3" stroke="#7a55a8" stroke-width="1.2" fill="none"/>
<path d="M624.3 482.3V494.1M645.2 482.3V483.6M653.4 482.3V484.5M668.3 482.3V488.5M679.5 482.3V483.2M685.5 482.3V487.2M708.3 482.3V485.4M717.4 482.3V487.2M728.3 482.3V489.4M733.4 482.3V493.2M742.3 482.3V480.3M746.5 482.3V482.3M767.4 482.3V480.3M776.4 482.3V475.4M793.3 482.3V479.5M804.2 482.3V481.4M811.4 482.3V486.3M823.5 482.3V487.2M825.3 482.3V495.4M840.4 482.3V476.3M861.4 482.3V482.3M869.6 482.3V484.5M880.7 482.3V486.3M890.4 482.3V480.3M900.4 482.3V482.3M910.4 482.3V487.2M917.4 482.3V479.5M928.3 482.3V479.5" stroke="#3d7072" stroke-width="1.2" fill="none"/>
<path d="M602.4 482.3V484.5M617.3 482.3V477.2M630.5 482.3V481.4M638.3 482.3V482.3M653.4 482.3V468.6M665.4 482.3V482.3M677.3 482.3V471.3M696.4 482.3V482.3M708.3 482.3V486.3M715.2 482.3V476.3M719.2 482.3V475.4M735.5 482.3V474.1M739.6 482.3V488.5M762.3 482.3V482.3M769.3 482.3V473.2M777.3 482.3V475.4M781.5 482.3V490.3M808.8 482.3V479.5M817.5 482.3V481.4M826.2 482.3V486.3M836.2 482.3V471.3M837.2 482.3V485.4M850.5 482.3V492.3M870.3 482.3V472.3M883.3 482.3V487.2M897.3 482.3V485.4M905.5 482.3V475.4M912.4 482.3V495.4M925.2 482.3V477.2M942.5 482.3V495.4M957.4 482.3V482.3M964.2 482.3V484.5M971.3 482.3V478.5M982.3 482.3V487.2M985.2 482.3V476.3M989.2 482.3V481.4M992.5 482.3V480.3M999.2 482.3V478.5M1003.2 482.3V483.2" stroke="#b08000" stroke-width="1.2" fill="none"/>
<path d="M658.3 482.3V487.2M662.3 482.3V456.2M678.2 482.3V454.4M689.5 482.3V445.7M699.2 482.3V464.4M709.2 482.3V454.4M715.6 482.3V455.7M730.5 482.3V449.5M746.3 482.3V459.5M748.3 482.3V470.4M759.6 482.3V475.4M778.4 482.3V455.3M804.2 482.3V465.3M805.5 482.3V452.2M824.0 482.3V462.2M828.4 482.3V458.4M830.2 482.3V486.3" stroke="#128a3e" stroke-width="1.2" fill="none"/>
<path d="M659.8 508.9h5v5h-5zM667.0 510.6h5v5h-5zM680.8 511.7h5v5h-5zM690.8 508.9h5v5h-5zM693.9 493.8h5v5h-5zM710.0 535.7h5v5h-5zM714.0 497.8h5v5h-5z" fill="#9c70d4"/>
<path d="M621.8 491.6h5v5h-5zM642.7 481.1h5v5h-5zM650.9 482.0h5v5h-5zM665.8 486.0h5v5h-5zM677.0 480.7h5v5h-5zM683.0 484.7h5v5h-5zM705.8 482.9h5v5h-5zM714.9 484.7h5v5h-5zM725.8 486.9h5v5h-5zM730.9 490.7h5v5h-5zM739.8 477.8h5v5h-5zM744.0 479.8h5v5h-5zM764.9 477.8h5v5h-5zM773.9 472.9h5v5h-5zM790.8 477.0h5v5h-5zM801.7 478.9h5v5h-5zM808.9 483.8h5v5h-5zM821.0 484.7h5v5h-5zM822.8 492.9h5v5h-5zM837.9 473.8h5v5h-5zM858.9 479.8h5v5h-5zM867.1 482.0h5v5h-5zM878.2 483.8h5v5h-5zM887.9 477.8h5v5h-5zM897.9 479.8h5v5h-5zM907.9 484.7h5v5h-5zM914.9 477.0h5v5h-5zM925.8 477.0h5v5h-5z" fill="#5f9ea0"/>
<path d="M599.9 482.0h5v5h-5zM614.8 474.7h5v5h-5zM628.0 478.9h5v5h-5zM635.8 479.8h5v5h-5zM650.9 466.1h5v5h-5zM662.9 479.8h5v5h-5zM674.8 468.8h5v5h-5zM693.9 479.8h5v5h-5zM705.8 483.8h5v5h-5zM712.7 473.8h5v5h-5zM716.7 472.9h5v5h-5zM733.0 471.6h5v5h-5zM737.1 486.0h5v5h-5zM759.8 479.8h5v5h-5zM766.8 470.7h5v5h-5zM774.8 472.9h5v5h-5zM779.0 487.8h5v5h-5zM806.3 477.0h5v5h-5zM815.0 478.9h5v5h-5zM823.7 483.8h5v5h-5zM833.7 468.8h5v5h-5zM834.7 482.9h5v5h-5zM848.0 489.8h5v5h-5zM867.8 469.8h5v5h-5zM880.8 484.7h5v5h-5zM894.8 482.9h5v5h-5zM903.0 472.9h5v5h-5zM909.9 492.9h5v5h-5zM922.7 474.7h5v5h-5zM940.0 492.9h5v5h-5zM954.9 479.8h5v5h-5zM961.7 482.0h5v5h-5zM968.8 476.0h5v5h-5zM979.8 484.7h5v5h-5zM982.7 473.8h5v5h-5zM986.7 478.9h5v5h-5zM990.0 477.8h5v5h-5zM996.7 476.0h5v5h-5zM1000.7 480.7h5v5h-5z" fill="#ffbb00"/>
<path d="M655.8 484.7h5v5h-5zM659.8 453.7h5v5h-5zM675.7 451.9h5v5h-5zM687.0 443.2h5v5h-5zM696.7 461.9h5v5h-5zM706.7 451.9h5v5h-5zM713.1 453.2h5v5h-5zM728.0 447.0h5v5h-5zM743.8 457.0h5v5h-5zM745.8 467.9h5v5h-5zM757.1 472.9h5v5h-5zM775.9 452.8h5v5h-5zM801.7 462.8h5v5h-5zM803.0 449.7h5v5h-5zM821.5 459.7h5v5h-5zM825.9 455.9h5v5h-5zM827.7 483.8h5v5h-5z" fill="#16d95c"/>
</svg></body></html>
